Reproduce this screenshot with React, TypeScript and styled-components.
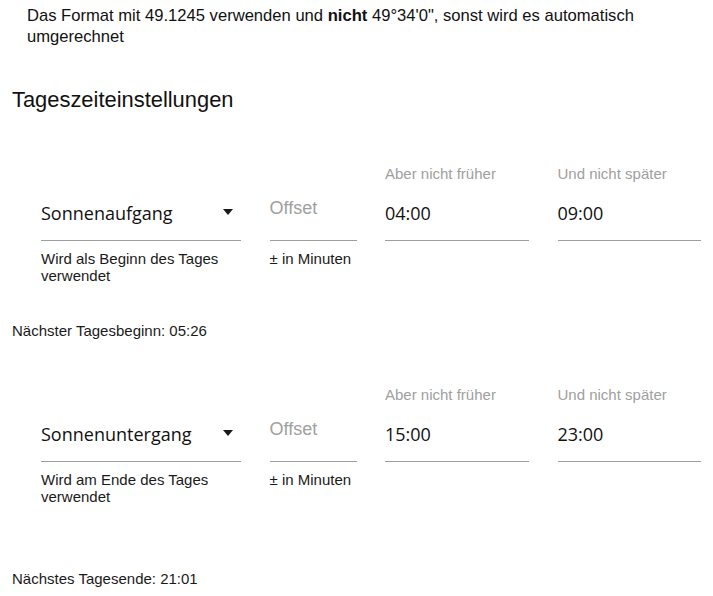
import React from "react";
import styled, { createGlobalStyle } from "styled-components";

const GlobalStyle = createGlobalStyle`
  html, body {
    margin: 0;
    padding: 0;
    background: #ffffff;
  }
  body {
    font-family: "Liberation Sans", Arial, sans-serif;
    color: #111111;
  }
`;

const Page = styled.div`
  width: 713px;
  box-sizing: border-box;
  padding: 6px 12px 0 12px;
`;

const Intro = styled.p`
  margin: 0 0 0 15px;
  font-size: 16.6px;
  line-height: 20.5px;
  color: #111111;
  b {
    font-weight: bold;
  }
`;

const Title = styled.h2`
  margin: 40px 0 0 0;
  font-size: 21.9px;
  line-height: 26px;
  font-weight: normal;
  color: #111111;
`;

const Section = styled.section<{ $top: number }>`
  margin-top: ${(p) => p.$top}px;
`;

const FieldRow = styled.div`
  display: grid;
  grid-template-columns: 200px 87px 144px 143px;
  column-gap: 28.5px;
  margin-left: 29px;
`;

const Field = styled.div`
  display: flex;
  flex-direction: column;
`;

const FloatLabel = styled.div`
  height: 18px;
  font-size: 15px;
  line-height: 18px;
  color: #a0a0a0;
  white-space: nowrap;
`;

const InputBox = styled.div<{ $pad: number }>`
  margin-top: 8px;
  height: 49px;
  box-sizing: content-box;
  border-bottom: 1px solid #9e9e9e;
  display: flex;
  align-items: flex-end;
  justify-content: space-between;
  & > * {
    margin-bottom: ${(p) => p.$pad}px;
  }
`;

const Value = styled.span`
  font-family: "Open Sans", "Liberation Sans", sans-serif;
  font-size: 18px;
  line-height: 24px;
  color: #111111;
  white-space: nowrap;
`;

const Placeholder = styled.span`
  font-size: 18px;
  line-height: 21px;
  color: #a0a0a0;
`;

const Caret = styled.svg`
  width: 10px;
  height: 6px;
  margin-right: 8px;
`;

const SelectValue = styled(InputBox)`
  & > svg {
    margin-bottom: 25px;
  }
`;

const Helper = styled.div`
  margin-top: 9px;
  font-size: 15px;
  line-height: 17px;
  color: #1a1a1a;
`;

const Info = styled.div<{ $gap: number }>`
  margin-top: ${(p) => p.$gap}px;
  font-size: 15px;
  line-height: 18px;
  color: #1a1a1a;
`;

type TimeSection = {
  event: string;
  helper: string;
  from: string;
  to: string;
  info: string;
  top: number;
  infoGap: number;
};

const sections: TimeSection[] = [
  {
    event: "Sonnenaufgang",
    helper: "Wird als Beginn des Tages verwendet",
    from: "04:00",
    to: "09:00",
    info: "Nächster Tagesbeginn: 05:26",
    top: 52,
    infoGap: 38,
  },
  {
    event: "Sonnenuntergang",
    helper: "Wird am Ende des Tages verwendet",
    from: "15:00",
    to: "23:00",
    info: "Nächstes Tagesende: 21:01",
    top: 46,
    infoGap: 65,
  },
];

function DaySection({ s }: { s: TimeSection }) {
  return (
    <Section $top={s.top}>
      <FieldRow>
        <Field>
          <FloatLabel />
          <SelectValue $pad={15}>
            <Value>{s.event}</Value>
            <Caret viewBox="0 0 10 6">
              <polygon points="0,0 10,0 5,6" fill="#1a1a1a" />
            </Caret>
          </SelectValue>
          <Helper>{s.helper}</Helper>
        </Field>
        <Field>
          <FloatLabel />
          <InputBox $pad={21}>
            <Placeholder>Offset</Placeholder>
          </InputBox>
          <Helper>± in Minuten</Helper>
        </Field>
        <Field>
          <FloatLabel>Aber nicht früher</FloatLabel>
          <InputBox $pad={15}>
            <Value>{s.from}</Value>
          </InputBox>
        </Field>
        <Field>
          <FloatLabel>Und nicht später</FloatLabel>
          <InputBox $pad={15}>
            <Value>{s.to}</Value>
          </InputBox>
        </Field>
      </FieldRow>
      <Info $gap={s.infoGap}>{s.info}</Info>
    </Section>
  );
}

export default function App() {
  return (
    <>
      <GlobalStyle />
      <Page>
        <Intro>
          Das Format mit 49.1245 verwenden und <b>nicht</b> 49°34'0", sonst wird es automatisch umgerechnet
        </Intro>
        <Title>Tageszeiteinstellungen</Title>
        {sections.map((s) => (
          <DaySection key={s.event} s={s} />
        ))}
      </Page>
    </>
  );
}
